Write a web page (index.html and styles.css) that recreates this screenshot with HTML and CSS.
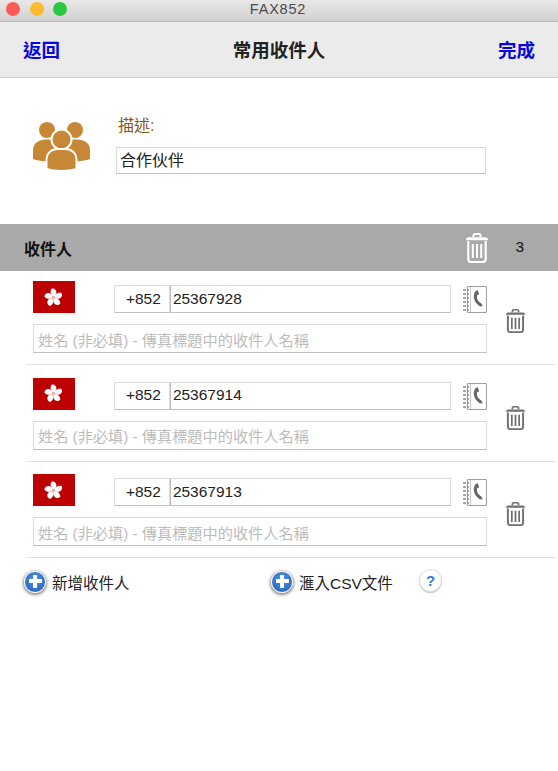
FILE: index.html
```html
<!DOCTYPE html>
<html lang="zh-Hant">

<head>
    <meta charset="UTF-8">
    <meta name="viewport" content="width=device-width, initial-scale=1.0">
    <title>FAX852</title>
    <link rel="stylesheet" href="styles.css">
</head>

<body>
    <svg class="sprites" width="0" height="0">
        <symbol id="trash" viewBox="0 0 24 30" preserveAspectRatio="none">
            <path d="M8.500 4V2.600C8.500 1.700 9.200 1 10 1h4c.9 0 1.500.7 1.500 1.600V4" fill="none" stroke="currentColor" stroke-width="2"/>
            <path d="M1 7.200C1 5.500 2 4.300 3.500 4.300h17C22 4.300 23 5.500 23 7.200z" fill="currentColor"/>
            <path d="M3.300 8v18c0 1.900 1 3 2.700 3h12c1.700 0 2.700-1.100 2.700-3V8" fill="none" stroke="currentColor" stroke-width="2.200"/>
            <path d="M7.800 11v14M12 11v14M16.200 11v14" fill="none" stroke="currentColor" stroke-width="2"/>
        </symbol>
        <symbol id="book" viewBox="0 0 25 27">
            <path d="M5.500.5h19v26h-19z" fill="#fff" stroke="#9a9a9a"/>
            <path d="M8.500 1v25" stroke="#c4c4c4"/>
            <path d="M1 4h6M1 8h6M1 12h6M1 16h6M1 20h6M1 24h6" stroke="#8a8a8a" stroke-width="1.500" stroke-dasharray="3 1"/>
            <path d="M15 6C12 9.500 13 15.500 18.500 19" fill="none" stroke="#666" stroke-width="3"/>
            <path d="M13.500 5.200 15.800 4l1.400 4.200-2.300 1zM16.500 18.500l2-1.800 2.300 2.900-2 1.200z" fill="#666"/>
        </symbol>
        <symbol id="flower" viewBox="-10 -10 20 20">
            <path id="petal" d="M0-.5C-3.200-2.500-4-6.500-2-9.500 2.200-10.200 4.300-6 2.300-3 1.500-2 .7-1.200 0-.5z" fill="#fff"/>
            <use href="#petal" transform="rotate(72)"/>
            <use href="#petal" transform="rotate(144)"/>
            <use href="#petal" transform="rotate(216)"/>
            <use href="#petal" transform="rotate(288)"/>
            <circle r="1.800" fill="#eeb0b0"/>
        </symbol>
    </svg>

    <div class="titlebar">
        <span class="dot red"></span>
        <span class="dot yellow"></span>
        <span class="dot green"></span>
        <span class="app-name">FAX852</span>
    </div>

    <div class="navbar">
        <a class="nav-link">返回</a>
        <h1 class="nav-title">常用收件人</h1>
        <a class="nav-link">完成</a>
    </div>

    <div class="desc">
        <svg class="people" viewBox="0 0 57 49">
            <circle cx="14" cy="8" r="8" fill="#c68835"/>
            <circle cx="42" cy="8" r="8" fill="#c68835"/>
            <path d="M0 37V28C0 21 6 17.500 13 17.500h31C51 17.500 57 21 57 28v9c-6 2-12 3-28.500 3S6 39 0 37z" fill="#c68835"/>
            <circle cx="28.500" cy="17.500" r="10" fill="#c68835" stroke="#fff" stroke-width="2"/>
            <path d="M13.500 47V38c0-7 5-11 11-11h8C38.500 27 43.500 31 43.500 38v9C39 48.500 34 49 28.500 49S18 48.500 13.500 47z" fill="#c68835" stroke="#fff" stroke-width="2"/>
        </svg>
        <div class="desc-body">
            <label class="desc-label" for="desc-input">描述:</label>
            <input class="field desc-input" id="desc-input" type="text" value="合作伙伴">
        </div>
    </div>

    <div class="list-header">
        <span class="list-title">收件人</span>
        <svg class="header-trash"><use href="#trash"/></svg>
        <span class="list-count">3</span>
    </div>

    <div class="row row-first">
        <div class="row-main">
            <div class="phone-line">
                <span class="flag"><svg class="flower"><use href="#flower"/></svg></span>
                <input class="field code" type="text" value="+852">
                <input class="field number" type="text" value="25367928">
                <svg class="book"><use href="#book"/></svg>
            </div>
            <input class="field name" type="text" placeholder="姓名 (非必填) - 傳真標題中的收件人名稱">
        </div>
        <svg class="row-trash"><use href="#trash"/></svg>
    </div>

    <div class="row">
        <div class="row-main">
            <div class="phone-line">
                <span class="flag"><svg class="flower"><use href="#flower"/></svg></span>
                <input class="field code" type="text" value="+852">
                <input class="field number" type="text" value="25367914">
                <svg class="book"><use href="#book"/></svg>
            </div>
            <input class="field name" type="text" placeholder="姓名 (非必填) - 傳真標題中的收件人名稱">
        </div>
        <svg class="row-trash"><use href="#trash"/></svg>
    </div>

    <div class="row">
        <div class="row-main">
            <div class="phone-line">
                <span class="flag"><svg class="flower"><use href="#flower"/></svg></span>
                <input class="field code" type="text" value="+852">
                <input class="field number" type="text" value="25367913">
                <svg class="book"><use href="#book"/></svg>
            </div>
            <input class="field name" type="text" placeholder="姓名 (非必填) - 傳真標題中的收件人名稱">
        </div>
        <svg class="row-trash"><use href="#trash"/></svg>
    </div>

    <div class="actions">
        <a class="action add-one"><span class="plus"></span><span class="action-text">新增收件人</span></a>
        <a class="action add-csv"><span class="plus"></span><span class="action-text">滙入CSV文件</span></a>
        <span class="help">?</span>
    </div>
</body>

</html>
```

FILE: styles.css
```css
* {
  box-sizing: border-box;
}
html, body {
  height: 100%;
}
body {
  margin: 0;
  background: #fff;
  color: #222;
  font-family: "Liberation Sans", "Noto Sans CJK TC", sans-serif;
  overflow: hidden;
}
.sprites {
  display: block;
  height: 0;
}

/* window title */
.titlebar {
  display: flex;
  align-items: center;
  height: 22px;
  padding: 0 0 3px 6px;
  background: linear-gradient(#e9e8e9, #d2d1d2);
  border-bottom: 1px solid #bcbcbc;
  position: relative;
}
.dot {
  width: 14px;
  height: 14px;
  border-radius: 50%;
  margin-right: 9.500px;
}
.red { background: #fc5b57; }
.yellow { background: #fdbc2e; }
.green { background: #2ac73f; }
.app-name {
  position: absolute;
  left: 0;
  right: 2px;
  top: 1px;
  text-align: center;
  font-size: 14.500px;
  letter-spacing: 0.8px;
  color: #4b4b4b;
}

/* nav */
.navbar {
  display: flex;
  justify-content: space-between;
  align-items: center;
  height: 56px;
  padding: 0 23px 2px;
  background: #ebebec;
  border-bottom: 1px solid #d2d2d2;
}
.nav-link {
  font-size: 18.500px;
  font-weight: bold;
  color: #0808dc;
}
.nav-title {
  margin: 0;
  font-size: 18.500px;
  font-weight: bold;
  color: #222;
}

/* description */
.desc {
  display: flex;
  height: 146px;
  padding: 44px 0 0 33px;
}
.people {
  width: 57px;
  height: 49px;
  flex: none;
}
.desc-body {
  display: flex;
  flex-direction: column;
  align-items: flex-start;
  margin: -10px 0 0 26px;
}
.desc-label {
  margin-left: 2px;
  height: 35px;
  font-size: 16px;
  color: #85540f;
}
.field {
  border: 1px solid #dadada;
  border-bottom-color: #c0c0c0;
  background: #fff;
  padding: 0 3px;
  margin: 0;
  outline: none;
  border-radius: 0;
  font-family: inherit;
  color: #222;
}
.desc-input {
  width: 370px;
  height: 27px;
  font-size: 16px;
  padding-bottom: 3px;
}

/* list */
.list-header {
  display: flex;
  align-items: center;
  height: 47px;
  padding: 0 34px 0 24px;
  background: #a9a9a9;
}
.list-title {
  font-size: 16px;
  font-weight: bold;
  color: #111;
  flex: 1;
}
.header-trash {
  width: 24px;
  height: 30px;
  color: #fff;
  margin: 1px 26px 0 0;
}
.list-count {
  font-size: 15.500px;
  color: #111;
  margin-bottom: 2px;
}
.row {
  display: flex;
  width: 529px;
  margin-left: 26px;
  padding: 12.500px 0 11px 7px;
  border-bottom: 1px solid #e2e2e2;
}
.row-first {
  padding-top: 10px;
}
.row-main {
  width: 454px;
  flex: none;
}
.phone-line {
  display: flex;
  align-items: flex-end;
  height: 32px;
}
.flag {
  display: flex;
  align-items: center;
  justify-content: center;
  width: 42px;
  height: 32px;
  margin-right: 39px;
  background: #bd0000;
}
.flower {
  width: 19px;
  height: 19px;
}
.code {
  width: 56px;
  height: 28px;
  font-size: 15.500px;
  padding: 0 0 1px 11px;
}
.number {
  width: 282px;
  height: 28px;
  font-size: 15.500px;
  padding: 0 3px 1px 2px;
  border-left-color: #bdbdbd;
}
.book {
  width: 25px;
  height: 27px;
  margin-left: 11px;
}
.name {
  display: block;
  width: 100%;
  height: 29px;
  margin-top: 11px;
  font-size: 15.200px;
  padding: 3px 4px 0;
}
.name::placeholder {
  color: #bcbcbc;
  opacity: 1;
}
.row-trash {
  width: 21px;
  height: 24px;
  margin: 28px 0 0 18px;
  color: #6f6f6f;
  flex: none;
}

/* bottom actions */
.actions {
  display: flex;
  align-items: center;
  padding: 12px 0 0 24px;
}
.action {
  display: flex;
  align-items: center;
  font-size: 15.500px;
  color: #222;
}
.action-text {
  padding-top: 1px;
}
.add-one {
  width: 247px;
}
.add-csv {
  width: 148px;
}
.plus {
  position: relative;
  width: 22px;
  height: 22px;
  margin-right: 6px;
  border-radius: 50%;
  border: 1.500px solid #f4f4f4;
  background: radial-gradient(circle at 50% 35%, #4d8fe6, #2460bd);
  box-shadow: 0 1px 3px 1px rgba(0, 0, 0, 0.45);
}
.plus::before,
.plus::after {
  content: "";
  position: absolute;
  background: #fff;
}
.plus::before {
  left: 3.500px;
  right: 3.500px;
  top: 7.500px;
  height: 4px;
}
.plus::after {
  top: 3.500px;
  bottom: 3.500px;
  left: 7.500px;
  width: 4px;
}
.help {
  width: 23px;
  height: 23px;
  margin-top: -3px;
  border-radius: 50%;
  border: 1px solid #ddd;
  background: #fff;
  box-shadow: 0 1px 1px rgba(0, 0, 0, 0.2);
  text-align: center;
  line-height: 21px;
  font-size: 15px;
  font-weight: bold;
  color: #2d7fd8;
}
```
